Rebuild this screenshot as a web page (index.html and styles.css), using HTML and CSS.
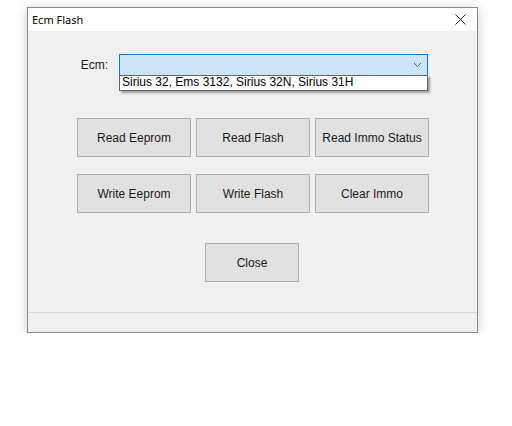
FILE: index.html
```html
<!DOCTYPE html>
<html lang="en">
<head>
    <meta charset="UTF-8">
    <title>Ecm Flash</title>
    <link rel="stylesheet" href="styles.css">
</head>
<body>
    <div class="window">
        <div class="titlebar">
            <span class="title">Ecm Flash</span>
            <svg class="close-x" width="11" height="11" viewBox="0 0 11 11">
                <path d="M0.5 0.5 L10.5 10.5 M10.5 0.5 L0.5 10.5" stroke="#2a2a2a" stroke-width="1" fill="none"/>
            </svg>
        </div>
        <div class="client">
            <!-- ecm selector -->
            <div class="ecm-row">
                <label class="ecm-label">Ecm:</label>
                <div class="combo">
                    <div class="combo-box">
                        <svg class="arrow" width="9" height="6" viewBox="0 0 9 6">
                            <path d="M1 1 L4.5 4.5 L8 1" stroke="#606060" stroke-width="1" fill="none"/>
                        </svg>
                    </div>
                    <div class="combo-list">Sirius 32, Ems 3132, Sirius 32N, Sirius 31H</div>
                </div>
            </div>

            <div class="btn-row">
                <button class="btn">Read Eeprom</button>
                <button class="btn">Read Flash</button>
                <button class="btn">Read Immo Status</button>
            </div>
            <div class="btn-row">
                <button class="btn">Write Eeprom</button>
                <button class="btn">Write Flash</button>
                <button class="btn">Clear Immo</button>
            </div>
            <div class="close-row">
                <button class="btn btn-close">Close</button>
            </div>
        </div>
        <div class="statusbar"></div>
    </div>
</body>
</html>
```

FILE: styles.css
```css
body {
    margin: 0;
    padding: 0;
    background: #fff;
    font-family: "Liberation Sans", Arial, sans-serif;
    font-size: 12px;
    color: #1a1a1a;
}
.window {
    box-sizing: border-box;
    margin: 7px 0 0 27px;
    width: 451px;
    border: 1px solid #8a8a8a;
    background: #f0f0f0;
    box-shadow: 0 2px 10px rgba(0, 0, 0, 0.2);
}
.titlebar {
    height: 23px;
    background: #fff;
    display: flex;
    align-items: center;
    justify-content: space-between;
    padding: 0 11px 0 4px;
}
.title {
    font-family: "Noto Sans", sans-serif;
    font-size: 11px;
    color: #000;
}
.client {
    height: 282px;
    padding-top: 23px;
    box-sizing: border-box;
    border-bottom: 1px solid #d8d8d8;
}
.ecm-row {
    display: flex;
    align-items: center;
    height: 22px;
}
.ecm-label {
    text-align: right;
    padding-right: 11px;
    box-sizing: border-box;
    width: 91px;
}
.combo {
    position: relative;
    width: 309px;
    height: 22px;
}
.combo-box {
    box-sizing: border-box;
    height: 22px;
    border: 1px solid #0078d7;
    background: #cce4f7;
    display: flex;
    align-items: center;
    justify-content: flex-end;
    padding-right: 5px;
}
.combo-list {
    position: absolute;
    left: 0;
    top: 21px;
    box-sizing: border-box;
    width: 309px;
    height: 16px;
    line-height: 13px;
    padding-left: 2px;
    border: 1px solid #646464;
    background: #fff;
    color: #000;
    box-shadow: 2px 2px 2px rgba(0, 0, 0, 0.35);
}
.btn-row {
    display: flex;
    gap: 5px;
    padding-left: 49px;
    margin-top: 42px;
}
.btn-row + .btn-row {
    margin-top: 17px;
}
.btn {
    box-sizing: border-box;
    width: 114px;
    height: 39px;
    border: 1px solid #adadad;
    background: #e1e1e1;
    font-family: "Liberation Sans", Arial, sans-serif;
    font-size: 12px;
    color: #1a1a1a;
    padding: 0;
}
.close-row {
    display: flex;
    margin-top: 30px;
    padding-left: 177px;
}
.btn-close {
    width: 94px;
}
.statusbar {
    height: 19px;
}
```
